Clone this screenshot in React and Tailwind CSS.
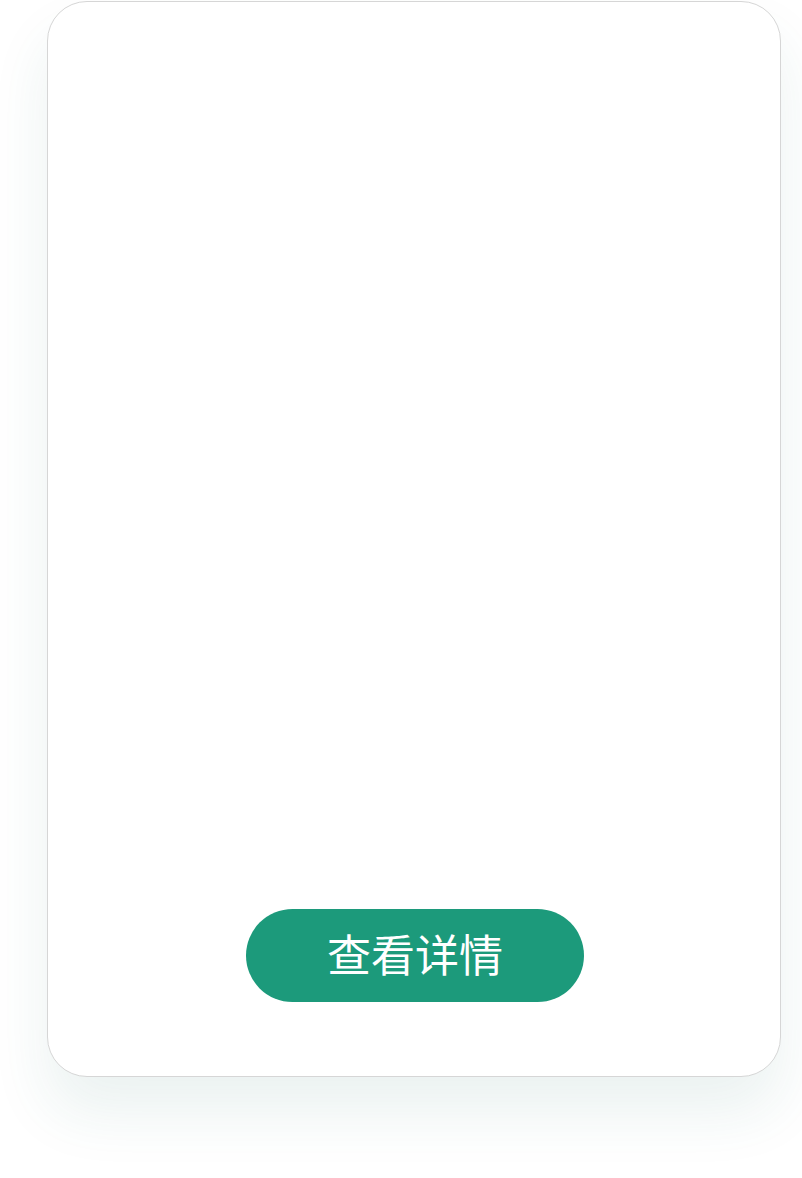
export default function App() {
  return (
    <div className="w-[802px] h-[1178px] bg-white pt-px pl-[47px]" style={{ fontFamily: '"Noto Sans CJK SC", "Noto Sans", sans-serif' }}>
      <div className="w-[734px] h-[1076px] rounded-[40px] border border-[#d6d6d6] bg-white shadow-[0_36px_60px_rgba(30,115,95,0.09)] flex flex-col items-center justify-end pb-[74px]">
        <button className="w-[338px] h-[93px] rounded-full bg-[#1c9a7b] text-white text-[44px] leading-none pb-[6px] ml-[2px]">
          查看详情
        </button>
      </div>
    </div>
  );
}
